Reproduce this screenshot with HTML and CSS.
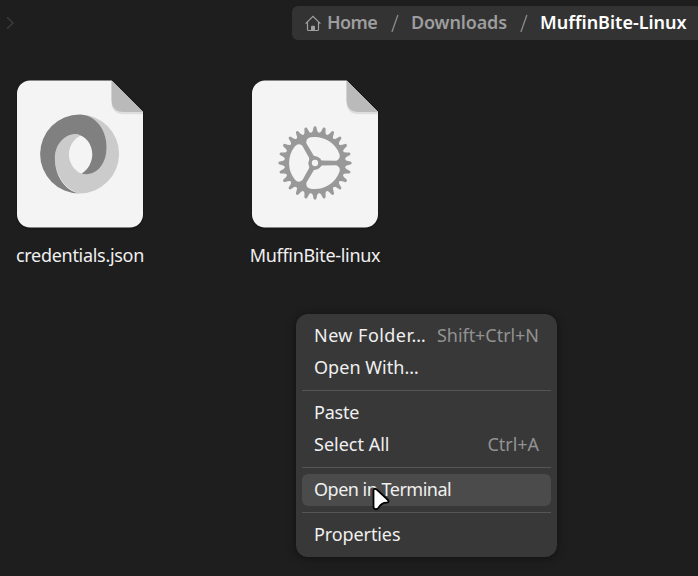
FILE: index.html
```
<!DOCTYPE html>
<html lang="en">
<head>
<meta charset="utf-8">
<title>MuffinBite-Linux</title>
<link rel="stylesheet" href="styles.css">
</head>
<body>
<div class="window">
  <header class="header">
    <svg class="forward" width="9" height="14" viewBox="0 0 9 14"><path d="M1 1.2 L7 7 L1 12.8"/></svg>
    <nav class="pathbar">
      <svg class="home-icon" width="16" height="17" viewBox="0 0 16 17">
        <path class="house" d="M0.6 8.7 L8 1.3 L15.4 8.7 M2.5 7.2 V14.5 Q2.5 15.5 3.5 15.5 H12.5 Q13.5 15.5 13.5 14.5 V7.2"/>
        <path class="door" d="M6 15.5 V11.7 Q6 10.7 7 10.7 H9 Q10 10.7 10 11.7 V15.5 Z"/>
      </svg>
      <span class="crumb home">Home</span>
      <span class="slash"><svg width="8" height="19" viewBox="0 0 8 19"><path d="M0.9 18 L6.9 1"/></svg></span>
      <span class="crumb downloads">Downloads</span>
      <span class="slash"><svg width="8" height="19" viewBox="0 0 8 19"><path d="M0.9 18 L6.9 1"/></svg></span>
      <span class="crumb current">MuffinBite-Linux</span>
    </nav>
  </header>

  <main class="files">
    <figure class="file">
      <svg class="sheet" width="126" height="148" viewBox="0 0 126 148">
        <path class="paper" d="M13 0.5 H94.5 L126 32 V134.5 A13 13 0 0 1 113 147.5 H13 A13 13 0 0 1 0 134.5 V13.5 A13 13 0 0 1 13 0.5 Z"/>
        <path class="fold-shadow" d="M94.5 0.5 V22 Q94.5 34.3 107 34.3 H126 V32 Z"/>
        <path class="fold" d="M94.5 0.5 V19.5 Q94.5 32 107 32 H126 Z"/>
        <g transform="translate(.6 .2)">
          <path class="ring-light" d="M62 34.3 A39.4 39.4 0 1 1 62 113.2 C48 110 37.3 94 37.3 78.3 C37.3 64 47 53.7 58.7 53.7 Q61.5 53.7 63 55.3 C56 59 51.3 66 51.3 74.5 C51.3 82.5 57 91 64 93.3 L68 94 C80 94 89 81 89 66.7 C89 49 77 36 62 34.3 Z"/>
          <path class="ring-dark" d="M62 113.3 A39.5 39.5 0 0 1 62 34.3 C77 34.3 89 49 89 66.7 C89 83 80 94 68 94 Q65.5 94 64 93.3 C70.5 89.5 74.7 82 74.7 74 C74.7 66 70 58 63 55.3 Q61 53.7 58.7 53.7 C47 53.7 37.3 64 37.3 78.3 C37.3 96 48 111 62 113.3 Z"/>
        </g>
      </svg>
      <figcaption>credentials.json</figcaption>
    </figure>
    <figure class="file">
      <svg class="sheet" width="126" height="148" viewBox="0 0 126 148">
        <path class="paper" d="M13 0.5 H94.5 L126 32 V134.5 A13 13 0 0 1 113 147.5 H13 A13 13 0 0 1 0 134.5 V13.5 A13 13 0 0 1 13 0.5 Z"/>
        <path class="fold-shadow" d="M94.5 0.5 V22 Q94.5 34.3 107 34.3 H126 V32 Z"/>
        <path class="fold" d="M94.5 0.5 V19.5 Q94.5 32 107 32 H126 Z"/>
        <g transform="translate(63 83) scale(.3333)">
          <circle class="gear" r="92"/>
          <g id="teeth" class="gear"></g>
          <circle class="gear" r="20"/>
          <g id="openings" class="hole"></g>
          <circle class="gear" r="20"/>
          <circle class="hole" r="9.5"/>
        </g>
      </svg>
      <figcaption>MuffinBite-linux</figcaption>
    </figure>
  </main>

  <div class="menu" role="menu">
    <div class="item"><span class="new-folder">New Folder…</span><span class="key">Shift+Ctrl+N</span></div>
    <div class="item"><span class="open-with">Open With…</span></div>
    <hr>
    <div class="item"><span class="paste">Paste</span></div>
    <div class="item"><span>Select All</span><span class="key">Ctrl+A</span></div>
    <hr>
    <div class="item active"><span class="terminal">Open in Terminal</span></div>
    <hr>
    <div class="item"><span class="properties">Properties</span></div>
  </div>

  <svg class="pointer" width="20" height="25" viewBox="0 0 20 25"><path d="M1.5 3.5 C1.5 1.6 3.2 1.3 4.5 2.4 L15.5 12.5 C17.3 14.2 16.6 15.7 14.5 15.7 C10.5 15.7 8.9 17 6.5 20.7 C4.700 23.2 1.5 22.5 1.5 19.5 Z"/></svg>
</div>
<script src="gear.js"></script>
</body>
</html>
```
FILE: styles.css
```
* { box-sizing: border-box; }
body {
  margin: 0;
  background: #1e1e1e;
  color: #f0f0f0;
  font: 400 18px/32px "Noto Sans", "Open Sans", sans-serif;
}
.window { position: relative; width: 698px; height: 576px; overflow: hidden; }
svg { display: block; flex: none; }

.header { display: flex; align-items: center; justify-content: space-between; padding: 6px 0 0 6px; height: 40px; }
.forward path { fill: none; stroke: #3b3b3b; stroke-width: 1.5; }
.pathbar {
  display: flex; align-items: center;
  width: 406px; height: 34px; padding-left: 13px;
  background: #333; border-radius: 6px 0 0 6px;
}
.house { fill: none; stroke: #a0a0a0; stroke-width: 1.2; }
.door { fill: #a0a0a0; }
.crumb { color: #9d9d9d; font-weight: 600; line-height: 32px; padding-bottom: 2px; white-space: nowrap; }
.home { width: 50px; margin-left: 6px; letter-spacing: -.6px; }
.slash { margin-left: 14px; }
.slash path { fill: none; stroke: #8b8b8b; stroke-width: 1.3; }
.downloads { width: 95px; margin-left: 12px; letter-spacing: -.15px; }
.current { margin-left: 12px; color: #fff; }

.files { display: flex; gap: 75px; padding-top: 40px; }
.file { margin: 0; width: 160px; display: flex; flex-direction: column; align-items: center; }
.sheet { filter: drop-shadow(0 1px 1px rgba(0,0,0,.4)); }
.paper { fill: #f4f4f4; }
.fold-shadow { fill: #dedede; }
.fold { fill: #bababa; }
.ring-light { fill: #cbcbcb; }
.ring-dark { fill: #808080; }
.gear { fill: #999; }
.hole { fill: #f4f4f4; }
figcaption { margin-top: 11px; white-space: nowrap; letter-spacing: -.3px; }

.menu {
  position: absolute; left: 296px; top: 314px; width: 261px; padding: 6px;
  border-radius: 12px; background: #383838;
  box-shadow: 0 1px 5px 1px rgba(0,0,0,.25), 0 2px 12px rgba(0,0,0,.15);
}
.item { display: flex; justify-content: space-between; height: 32px; line-height: 30px; padding: 0 12px; border-radius: 6px; white-space: nowrap; }
.active { background: #4b4b4b; }
.key { color: #929292; letter-spacing: -.05px; }
.new-folder { letter-spacing: .45px; }
.open-with { letter-spacing: .05px; }
.paste { letter-spacing: -.2px; }
.terminal { letter-spacing: -.5px; }
.properties { letter-spacing: -.1px; }
hr { height: 1px; margin: 6px 0; border: 0; background: #555; }

.pointer { position: absolute; left: 372px; top: 487px; }
.pointer path { fill: #fff; stroke: #000; stroke-width: 1.8; }
```
FILE: gear.js
```
const tooth = 'M88 -12 Q94 -6 106 -4.5 Q110 -4 110 0 Q110 4 106 4.5 Q94 6 88 12 Z';
const opening = 'M-60 -50 Q-50 -61 -38 -52 L-17 -14 Q-20 0 -17 14 L-38 52 Q-50 61 -60 50 A79 79 0 0 1 -60 -50 Z';

function repeat(id, d, count) {
  const group = document.getElementById(id);
  for (let i = 0; i < count; i++) {
    const path = document.createElementNS('http://www.w3.org/2000/svg', 'path');
    path.setAttribute('d', d);
    path.setAttribute('transform', `rotate(${i * 360 / count})`);
    group.append(path);
  }
}

repeat('teeth', tooth, 24);
repeat('openings', opening, 3);
```
